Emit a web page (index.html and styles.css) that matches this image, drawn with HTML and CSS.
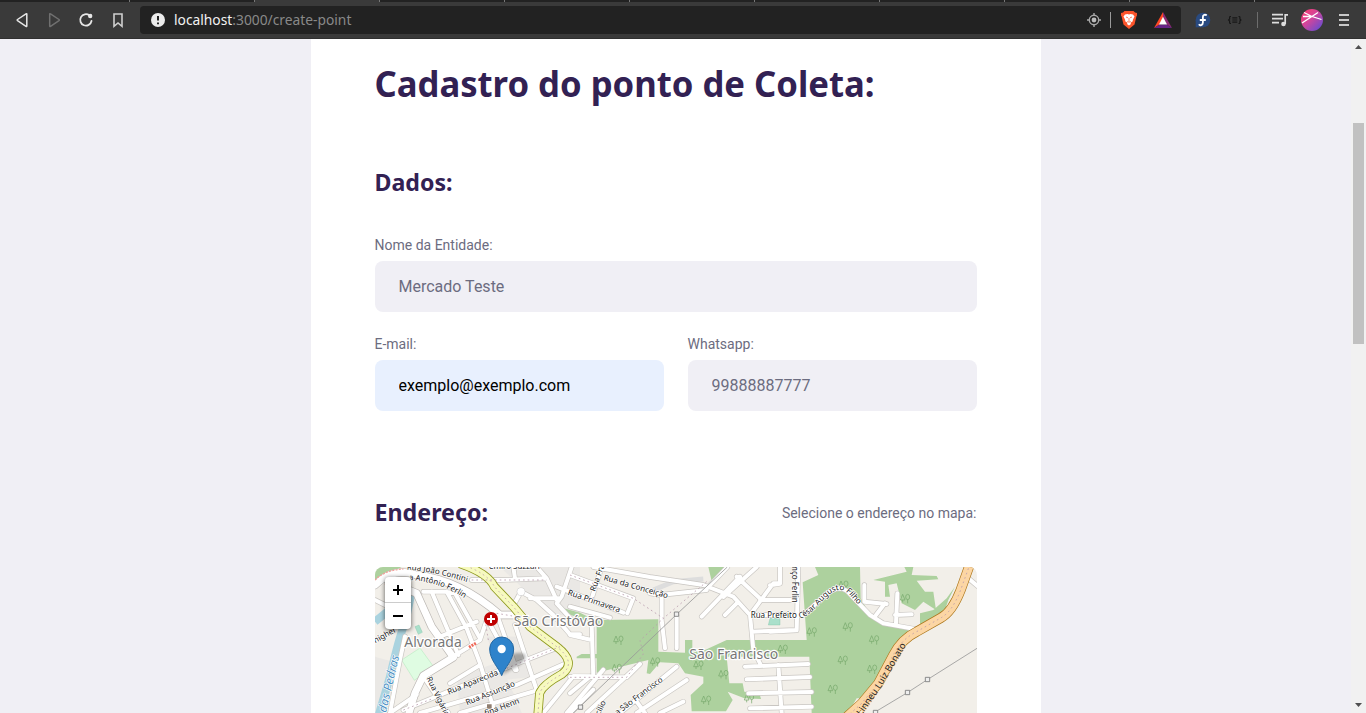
FILE: index.html
```html
<!DOCTYPE html>
<html lang="pt-BR">
<head>
<meta charset="utf-8">
<title>Cadastro do ponto de Coleta</title>
<link rel="stylesheet" href="styles.css">
</head>
<body>
<header class="browser">
  <div class="tabs"><i></i><i></i><i class="active"></i><i></i><i></i><i></i><i></i><i></i><i></i><i></i><i></i></div>
  <div class="toolbar">
    <svg class="nav-icons" width="140" height="34" viewBox="0 3 140 34" fill="none" stroke="#e6e6e6" stroke-width="1.5" stroke-linejoin="round" stroke-linecap="round">
      <path d="M26.8 14v12q0 .8-.8.3L17.500 20.6q-.7-.6 0-1.1l8.500-5.700q.8-.4.8.2z"/>
      <path stroke="#707070" d="M49.700 14v12q0 .8.8.3l8.500-5.700q.7-.6 0-1.100l-8.500-5.700q-.8-.4-.8.2z"/>
      <path stroke-width="1.800" d="M89.500 15.500a5.700 5.700 0 1 0 2 5.500"/><circle cx="90.200" cy="16" r="2.200" fill="#e6e6e6" stroke="none"/>
      <path stroke="#cfcfcf" stroke-width="1.600" stroke-linejoin="miter" d="M114 14h8v12.300l-4-3.300-4 3.300z"/>
    </svg>
    <div class="address">
      <svg width="14" height="14" viewBox="0 0 14 14"><circle cx="7" cy="7" r="7" fill="#ececec"/><path d="M7 3v4.600M7 9.400v1.900" stroke="#222" stroke-width="2"/></svg>
      <span class="url"><b>localhost</b>:3000/create-point</span>
      <svg class="address-icons" width="100" height="26" viewBox="1081 7 100 26">
        <g fill="none" stroke="#a8a8a8" stroke-width="1.400"><circle cx="1094" cy="20" r="4.700"/><path d="M1094 13v3M1094 24v3M1087 20h3M1098 20h3"/></g><circle cx="1094" cy="20" r="2.400" fill="#bbb"/>
        <path d="M1110.500 12v16" stroke="#9a9a9a"/>
        <path fill="#fb542b" d="M1124.500 11h9l1.500 1.500 2 .5v2.500l-.6 1-1.900 8-5.500 4.500-5.500-4.500-1.900-8-.6-1v-2.500l2-.5z"/>
        <path fill="#fff" d="M1125 14.500l2.500-.5 1.500.5 1.500-.5 2.500.5 1.500 2-1.500 3-.4 2-2.100 1.300.5 1.200-2 1.500-2-1.500.5-1.200-2.100-1.300-.4-2-1.500-3z"/><path d="M1126 17l2 .8M1132 17l-2 .8M1127.200 21.500l1.800.7 1.800-.7M1129 18v3.500" fill="none" stroke="#fb542b" stroke-width=".7"/>
        <path fill="#ff4724" d="M1163 12l-9 16 5.500-3.500 3.500-7z"/><path fill="#8b2b72" d="M1163 12l9 16-5.500-3.500-3.500-7z"/><path fill="#672486" d="M1154 28h18l-5.500-3.500h-7z"/><path fill="#fff" d="M1163 16.800l-4 7.700h8z"/>
      </svg>
    </div>
    <svg width="185" height="34" viewBox="1181 3 185 34">
      <circle cx="1203" cy="20" r="7.300" fill="#294a80"/><path d="M1195.700 20h7.300v7.300h-7.300z" fill="#294a80"/><path d="M1206.800 15.300c-2.400-1.300-3.900-.2-3.900 1.700v5.600c0 2.800-3 3.400-4 1.700M1199.800 20h6" fill="none" stroke="#fff" stroke-width="1.800"/>
      <g fill="none" stroke="#171717" stroke-width="1.200"><path d="M1231 16.500h-.6q-.8 0-.8.8v1.700l-1 1 1 1v1.700q0 .8.800.8h.6M1238.500 16.500h.6q.8 0 .8.8v1.700l1 1-1 1v1.700q0 .8-.8.8h-.6M1232.300 17.800h5M1232.300 20h5M1232.300 22.200h5"/></g>
      <path d="M1257.500 12v16" stroke="#6d6d6d"/>
      <g fill="none" stroke="#ddd" stroke-width="1.700"><path d="M1272 14.700h11M1272 18.700h11M1272 22.700h7M1288 14.900h-2.800v9"/></g><circle cx="1283.500" cy="24" r="2.300" fill="#ddd"/>
      <defs><linearGradient id="avatar" x2="1" y2="1"><stop stop-color="#ff3d69"/><stop offset=".45" stop-color="#d1459b"/><stop offset="1" stop-color="#524edc"/></linearGradient></defs>
      <circle cx="1312" cy="20" r="11" fill="url(#avatar)"/><path d="M1302 23l16-10.500M1304 12.500l8 4 9.500 3M1303 16.500l9 0" stroke="#fff" stroke-width="1.300" fill="none"/>
      <path d="M1339 15h10M1339 20h10M1339 25h10" stroke="#c8c8c8" stroke-width="1.800"/>
    </svg>
  </div>
</header>
<div class="viewport">
  <main class="page">
    <form class="card">
      <h1><svg width="502" height="50"><text x="-.5" y="35" textLength="500" lengthAdjust="spacingAndGlyphs">Cadastro do ponto de Coleta:</text></svg></h1>
      <h2 class="data-title"><svg width="90" height="32"><text x="-.5" y="23" textLength="78" lengthAdjust="spacingAndGlyphs">Dados:</text></svg></h2>
      <div class="field"><label for="name">Nome da Entidade:</label><input id="name" value="Mercado Teste"></div>
      <div class="field-row">
        <div class="field"><label for="email">E-mail:</label><input id="email" class="autofill" value="exemplo@exemplo.com"></div>
        <div class="field"><label for="phone">Whatsapp:</label><input id="phone" value="99888887777"></div>
      </div>
      <div class="address-title"><h2><svg width="120" height="32"><text x="-.5" y="24" textLength="113.500" lengthAdjust="spacingAndGlyphs">Endereço:</text></svg></h2><span>Selecione o endereço no mapa:</span></div>
      <div class="map">
        <svg width="602" height="146" viewBox="15 21 1806 438">
          <defs>
            <filter id="soft" x="-30%" y="-30%" width="160%" height="160%"><feGaussianBlur stdDeviation="4"/></filter>
            <g id="tree" fill="none" stroke="#78aa6d" stroke-width="2.200"><path d="M8 3L1 20h14zM8 20v7M23 18v12"/><ellipse cx="23" cy="11" rx="6" ry="8"/></g>
            <path id="roads" d="M160 95h70l60 110 40 105 45 149M185 95l80 190M225 95l30 5 75 135M210 230l110-45M240 295l90-55 20-60M100 450l280-115 190-75M150 459l290-84 140-62M270 459l235-69M350 175l85 155M385 175l55 155M435 195l65 195M160 350l75 109M240 370l90-55M60 459l80-55M305 60h85l140-5M430 21l5 34M453 95l47 25 50 45 50 58h30M453 95l-25 45M500 21l30 34 30 65M605 21l-30 89-15 20 50 55M480 115h85M15 120l60 30M60 459l30-160 15-70M520 459l90-110h50M590 459l110-130M600 45l190 70-18 45M695 21l-30 95M560 80l200 78M600 140l120 33M670 21l170 30 160 24 90 35 50 55 10 105 20 40M840 100l30 5 140-15M875 110v70l10 85M920 165v100M1110 50l-115 120M1072 21l-62 65M1160 21l-100 90M1100 50l75 70M1230 70h-20l-70 95M1100 130l-35 35M1170 120h110M1145 215l135-5M665 195l5 155M600 225l65 15M600 350l170 2 40-40M600 400l60-50M600 459l70-70M650 459l150-139M750 459l170-139M800 459l150-99M870 459l70-34M800 425l25 34M1125 320l190-8M1130 358l190-7M1135 400l190-4M1140 445l185-5M1225 315l10 144M1285 21l-5 190-80 4M1230 21v50l-30 5M1145 165h155l50-45q45-50 80-28l70 73 40 25 100 18M1483 75v50l67 7M1545 130l-27 35M1582 100l-4 90M1575 165l50-2M1795 55l30 25"/>
            <path id="wide" d="M15 75Q70 20 140 45q130 15 250 120h60M55 65l85 35 45 100 65 92-90 55-25 52-18 60"/>
            <path id="main" d="M275 13q80 28 98 67l57 60 50 60 80 60q62 48 15 83-55 30-66 56l-5 60"/>
            <path id="avenue" d="M1800 12l-28 78q-25 65-60 84l-72 41q-45 22-70 70l-45 85-50 60-42 38"/>
            <path id="cesar" d="M1142 173h150q18 0 58-42 52-62 85-30l75 82"/><path id="ferlin" d="M116 60q115 5 215 90"/><path id="linneu" d="M1474 468l60-87 90-152"/><path id="contini" d="M110 29Q210 36 330 80"/>
          </defs>
          <path fill="#f2efe9" d="M0 0h1840v480H0z"/>
          <g fill="#e0dfdf" opacity=".45"><path d="M260 350l130-45 65 154H270zM350 230h100l40 120-90 10zM15 290l70 20-20 149H15zM390 21h240v150l-90-10z"/></g>
          <path fill="none" stroke="#aad3df" stroke-width="24" d="M15 185l55-45 50-20-15 70q-15 30-45 160L25 469"/>
          <path d="M95 300l55-36 40 55-57 42z" fill="#dffce2" stroke="#8fe0a0"/><path d="M135 200l12-5 10 22-12 6z" fill="#aae0cb" stroke="#75bda1"/><path d="M1200 175h30v20h-35z" fill="#aae0cb" stroke="#75bda1"/>
          <g fill="#add19e">
            <path d="M15 21h80L15 60zM575 143l55 15 50 25-10 10-95-40zM620 290l15-8h50v13h-65zM1015 21h55l-45 42z"/>
            <path d="M680 180l185-2v97l80 3v-38h22v35l38-5 65-30h240L1298 67l47-22-10-24h135l2 94 28 50 40 25 90 25-50 45-50 90-50 65h-20l-25 44h-110l-7-169h-248l8 80h40l5 25 45 5 5 17-50-2-50-20 15 25-20 34H965l-3-49 38-35v-20l-55-10-20-30-55-3-30 35-10-2 5-40-155 38z"/>
            <path d="M1510 60l100-25-7-14h27l-5 24 75 3 5 10-65 4 25 33h25l8 55-38-25-25 25-40-20-15-60-25 5 5 35h-15v-45zM1755 80l-20 40-10 30-75 50v-40l40-10 40-35z"/>
          </g>
          <g><use href="#tree" x="730" y="225"/><use href="#tree" x="725" y="310"/><use href="#tree" x="840" y="290"/><use href="#tree" x="970" y="300"/><use href="#tree" x="1045" y="328"/><use href="#tree" x="993" y="405"/><use href="#tree" x="1122" y="400"/><use href="#tree" x="1310" y="200"/><use href="#tree" x="1418" y="185"/><use href="#tree" x="1497" y="224"/><use href="#tree" x="1403" y="285"/><use href="#tree" x="1491" y="312"/><use href="#tree" x="1373" y="372"/><use href="#tree" x="1223" y="252"/><use href="#tree" x="1405" y="60"/><use href="#tree" x="1590" y="100"/></g>
          <path d="M850 90l60-25 90-8" fill="none" stroke="#ddd" stroke-width="15"/>
          <g fill="none" stroke-linecap="round" stroke-linejoin="round">
            <use href="#roads" stroke="#c9c6c2" stroke-width="16"/><use href="#wide" stroke="#bdb9b5" stroke-width="25"/>
            <use href="#roads" stroke="#fff" stroke-width="12"/><use href="#wide" stroke="#fff" stroke-width="21"/>
            <use href="#main" stroke="#8f991f" stroke-width="27"/><use href="#main" stroke="#f7fabf" stroke-width="22"/>
            <use href="#avenue" stroke="#ad771b" stroke-width="30"/><use href="#avenue" stroke="#fcd6a4" stroke-width="26"/>
          </g>
          <circle cx="453" cy="95" r="12" fill="#fff" stroke="#ccc" stroke-width="2"/><circle cx="453" cy="95" r="10" fill="#fff"/>
          <g fill="none" stroke="#b99bad" stroke-width="2.500" stroke-dasharray="5 9"><use href="#main"/><use href="#avenue"/><path d="M305 60h225M600 45l190 70 90 60 130-110M600 352h170l50-70-10-40 70-67M410 325l160-65M345 180l10 60M100 450l90-35M380 160l60 10"/></g>
          <g fill="none" stroke="#999" stroke-width="2.500"><path d="M1072 21L920 163 600 469M1821 265l-149 94-60 39-120 72"/><g fill="#eee" stroke="#777"><path d="M913 156h13v13h-13zM625 435h13v13h-13zM1666 352h13v13h-13zM1606 391h13v13h-13zM1510 451h13v13h-13z"/></g></g>
          <path d="M15 60q30-30 85-33M45 75l15-15" fill="none" stroke="#f3a19b" stroke-width="4" stroke-dasharray="6 4"/><path d="M297 262l22-13" stroke="#ef6a5a" stroke-width="9" stroke-dasharray="6 3"/><path d="M351 433h14v13h-14z" fill="#917f70"/>
          <g class="street">
            <text><textPath href="#contini">Rua João Contini</textPath></text><text><textPath href="#ferlin">a Antônio Ferlin</textPath></text>
            <text x="357" y="26">emiro Suzzari</text><text transform="translate(16 250)rotate(-29)">nigher</text>
            <text transform="translate(236 404)rotate(-22)">Rua Aparecida</text><text transform="translate(291 436)rotate(-22)">Rua Assunção</text><text transform="translate(347 468)rotate(-21)">fina Henn</text><text transform="translate(169 355)rotate(64)">Rua Vigário</text>
            <text transform="translate(592 104)rotate(19)">Rua Primavera</text><text transform="translate(700 60)rotate(16)">Rua da Conceição</text><text transform="translate(675 96)rotate(-70)">Rua Fran</text>
            <text transform="translate(742 466)rotate(-37)">a São Francisco</text><text transform="translate(685 475)rotate(-65)">rcílio</text>
            <text transform="translate(1267 18)rotate(90)">nço Ferlin</text><text><textPath href="#cesar">Rua Prefeito César Augusto Filho</textPath></text>
            <text class="avenue-name"><textPath href="#linneu">Linneu Luiz Bonato</textPath></text>
          </g>
          <g class="place"><text x="103" y="262" textLength="172" lengthAdjust="spacingAndGlyphs">Alvorada</text><text x="431" y="198" textLength="269" lengthAdjust="spacingAndGlyphs">São Cristóvão</text><text x="958" y="298" textLength="267" lengthAdjust="spacingAndGlyphs">São Francisco</text></g>
          <text class="river" transform="translate(48 459)rotate(-77)" textLength="175" lengthAdjust="spacingAndGlyphs">das Pedras</text>
          <circle cx="363" cy="177" r="21" fill="#bf0000"/><path d="M363 165v24M351 177h24" stroke="#fff" stroke-width="6"/>
          <path d="M396 345l30-62q24-10 38 0 10 14-22 36z" fill="#222" opacity=".35" filter="url(#soft)"/>
          <path d="M395 347c-8-23-36-47-36-80a36 36 0 0 1 72 0c0 33-28 57-36 80z" fill="#2e83cb" stroke="#2468a2" stroke-width="3"/><circle cx="395" cy="267" r="12.500" fill="#fff"/>
        </svg>
        <div class="zoom"><button type="button" aria-label="Ampliar"><svg width="12" height="12"><path d="M6 1v10M1 6h10" stroke="#000" stroke-width="2"/></svg></button><button type="button" aria-label="Reduzir"><svg width="12" height="12"><path d="M1 6h10" stroke="#000" stroke-width="2"/></svg></button></div>
      </div>
    </form>
  </main>
  <aside class="scrollbar"><svg width="13" height="7"><path d="M3 6L6.500 2 10 6z" fill="#505050"/></svg><i></i><svg class="down" width="13" height="7"><path d="M3 1l3.500 4L10 1z" fill="#505050"/></svg></aside>
</div>
</body>
</html>
```
FILE: styles.css
```css
* { box-sizing: border-box; }
body { margin: 0; height: 713px; overflow: hidden; background: #f0eff5; font-family: Roboto, sans-serif; color: #6c6c80; }
svg { display: block; }
.browser { height: 39px; background: #3a3a3a; border-bottom: 1px solid #303030; }
.tabs { display: flex; height: 2px; background: #222; }
.tabs i { flex: 0 0 125px; border-right: 1px solid #777; }
.tabs i:first-child { flex-basis: 130px; }
.tabs .active { background: #3a3a3a; }
.toolbar { display: flex; align-items: center; height: 36px; }
.toolbar > svg { flex: none; }
.address { display: flex; align-items: center; width: 1041px; height: 28px; padding-left: 11px; border-radius: 4px; background: #222; }
.url { margin: 0 0 2px 9px; font: 13.8px "Noto Sans", sans-serif; color: #898989; }
.url b { font-weight: 400; color: #f2f2f2; }
.address-icons { margin-left: auto; }
.viewport { display: flex; height: 674px; }
.page { flex: 1; padding-left: 310.5px; }
.card { width: 730px; height: 674px; padding: 20px 64px 0; background: #fff; }
h1, h2 { margin: 0; font-family: "Noto Sans", sans-serif; font-weight: 700; }
h1 svg, h2 svg { overflow: visible; }
h1 text { font-size: 35.5px; fill: #322153; }
h2 text { font-size: 23.5px; fill: #322153; }
h1 { height: 50px; margin-top: 3px; }
.data-title { height: 32px; margin-top: 56px; }
.field { display: flex; flex-direction: column; flex: 1; }
.data-title + .field { margin-top: 37px; }
label { height: 16px; margin-bottom: 8px; font-size: 14px; line-height: 16px; }
input { width: 100%; height: 51px; padding: 0 24px; border: 0; border-radius: 8px; background: #f0eff5; color: #6c6c80; font: 16px Roboto, sans-serif; outline: 0; }
.autofill { background: #e8f0fe; color: #000; }
.field-row { display: flex; gap: 24px; margin-top: 24px; }
.address-title { display: flex; justify-content: space-between; align-items: center; height: 32px; margin-top: 86px; font-size: 14px; }
.map { position: relative; height: 146px; margin-top: 38px; border-radius: 8px 8px 0 0; overflow: hidden; }
.map text { font-family: "Noto Sans", sans-serif; paint-order: stroke; stroke-linejoin: round; }
.street { font-size: 24px; fill: #222; stroke: #fff; stroke-width: 4px; }
.avenue-name { font-size: 28px; stroke: #fcd6a4; }
.place { font-size: 42px; fill: #777; stroke: #fff; stroke-width: 7px; }
.river { font-size: 35px; font-style: italic; fill: #4e91c5; stroke: #fff; stroke-width: 4px; }
.zoom { position: absolute; left: 10px; top: 10px; width: 26px; height: 52px; border-radius: 4px; background: #fff; box-shadow: 0 1px 5px rgba(0,0,0,.65); }
.zoom button { display: flex; align-items: center; justify-content: center; width: 26px; height: 26px; padding: 0; border: 0; background: none; }
.zoom button:first-child { border-bottom: 1px solid #ccc; }
.scrollbar { display: flex; flex-direction: column; width: 15px; padding: 4px 1px 4px; background: #f1f1f1; }
.scrollbar i { width: 11px; height: 221px; margin: 73px 0 0 1px; background: #c1c1c1; }
.scrollbar .down { margin-top: auto; }
```
